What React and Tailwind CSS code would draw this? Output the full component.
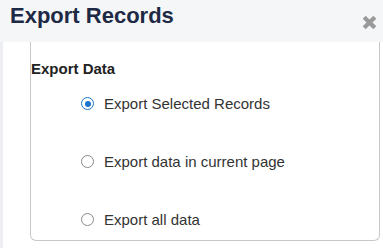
import React from "react";

const options = [
    { id: "selected", label: "Export Selected Records", checked: true },
    { id: "page", label: "Export data in current page", checked: false },
    { id: "all", label: "Export all data", checked: false },
];

const Radio = ({ checked }) => (
    <span className={`flex items-center justify-center w-[13px] h-[13px] rounded-full border-[1.5px] ${checked ? "border-[#1a73c9]" : "border-[#8a8a8a]"} bg-white`}>
        {checked && <span className="w-[6px] h-[6px] rounded-full bg-[#1a73c9]" />}
    </span>
);

const App = () => {
    return (
        <div className="w-[383px] h-[248px] bg-white overflow-hidden font-['Liberation_Sans',Arial,sans-serif]">
            <div className="h-[42px] bg-[#f5f6f7] flex items-start justify-between pl-[10px] pr-[5px]">
                <h1 className="text-[22px] leading-none font-bold text-[#1e2a45] mt-[5px]">Export Records</h1>
                <svg className="mt-[14px]" width="17" height="17" viewBox="0 0 16 16">
                    <path d="M3 3 L13 13 M13 3 L3 13" stroke="#9a9a9a" strokeWidth="4" strokeLinecap="butt" />
                </svg>
            </div>
            <div className="flex h-[206px]">
                <div className="w-[3px] bg-[#eceef3]" />
                <div className="flex-1 pl-[27px] pr-[3px] pb-[7px]">
                    <div className="h-full border-l border-b border-r border-[#c8c8c8] rounded-bl-[6px] rounded-br-[6px]">
                        <div className="pt-[19px] text-[15px] font-bold text-[#222] leading-none">Export Data</div>
                        <div className="flex flex-col gap-[43px] pl-[50px] mt-[20px]">
                            {options.map((o) => (
                                <label key={o.id} className="flex items-center gap-[10px] text-[15px] text-[#333] leading-none">
                                    <Radio checked={o.checked} />
                                    <span>{o.label}</span>
                                </label>
                            ))}
                        </div>
                    </div>
                </div>
            </div>
        </div>
    );
};

export default App;
